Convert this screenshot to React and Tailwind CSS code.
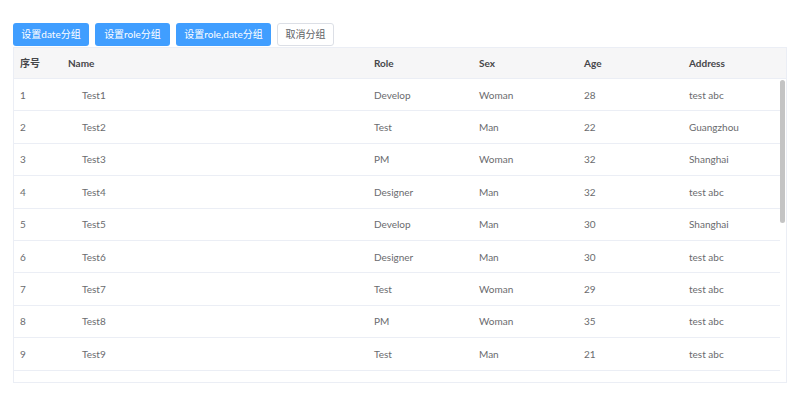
import React from 'react';

const rows = [
  { id: 1, name: 'Test1', role: 'Develop', sex: 'Woman', age: 28, address: 'test abc' },
  { id: 2, name: 'Test2', role: 'Test', sex: 'Man', age: 22, address: 'Guangzhou' },
  { id: 3, name: 'Test3', role: 'PM', sex: 'Woman', age: 32, address: 'Shanghai' },
  { id: 4, name: 'Test4', role: 'Designer', sex: 'Man', age: 32, address: 'test abc' },
  { id: 5, name: 'Test5', role: 'Develop', sex: 'Man', age: 30, address: 'Shanghai' },
  { id: 6, name: 'Test6', role: 'Designer', sex: 'Man', age: 30, address: 'test abc' },
  { id: 7, name: 'Test7', role: 'Test', sex: 'Woman', age: 29, address: 'test abc' },
  { id: 8, name: 'Test8', role: 'PM', sex: 'Woman', age: 35, address: 'test abc' },
  { id: 9, name: 'Test9', role: 'Test', sex: 'Man', age: 21, address: 'test abc' },
];

const cols = 'grid grid-cols-[47px_306px_105px_105px_105px_1fr]';

export default function App() {
  return (
    <div className="w-[800px] h-[399px] bg-white overflow-hidden font-['Lato','Noto_Sans_CJK_SC',sans-serif] text-[10px]">
      <div className="pl-[13px] pt-[23px] flex gap-[6px]">
        <button className="h-[23px] w-[76px] rounded-[3px] bg-[#409eff] text-white">设置date分组</button>
        <button className="h-[23px] w-[75px] rounded-[3px] bg-[#409eff] text-white">设置role分组</button>
        <button className="h-[23px] w-[95px] rounded-[3px] bg-[#409eff] text-white">设置role,date分组</button>
        <button className="h-[23px] w-[57px] rounded-[3px] bg-white border border-[#dcdfe6] text-[#606266]">取消分组</button>
      </div>
      <div className="ml-[13px] mt-px w-[774px] border border-[#ebeef5]">
        <div className={`${cols} h-[31px] items-center bg-[#f6f6f7] border-b border-[#ebeef5] font-bold text-[#46474a]`}>
          <div className="pl-[6px]">序号</div>
          <div className="pl-[7px]">Name</div>
          <div className="pl-[7px]">Role</div>
          <div className="pl-[7px]">Sex</div>
          <div className="pl-[7px]">Age</div>
          <div className="pl-[7px]">Address</div>
        </div>
        <div className="flex h-[303px] overflow-hidden">
          <div className="flex-1">
            {rows.map(r => (
              <div key={r.id} className={`${cols} h-[32.4px] items-center pt-px border-b border-[#ebeef5] text-[#6a6b6e]`}>
                <div className="pl-[6px]">{r.id}</div>
                <div className="pl-[21px]">{r.name}</div>
                <div className="pl-[7px]">{r.role}</div>
                <div className="pl-[7px]">{r.sex}</div>
                <div className="pl-[7px]">{r.age}</div>
                <div className="pl-[7px]">{r.address}</div>
              </div>
            ))}
            <div className="h-[32.4px]"></div>
          </div>
          <div className="w-[6px] pt-[1px] pr-[1px]">
            <div className="h-[143px] w-[5px] rounded-full bg-[#c4c4c4]"></div>
          </div>
        </div>
      </div>
    </div>
  );
}
